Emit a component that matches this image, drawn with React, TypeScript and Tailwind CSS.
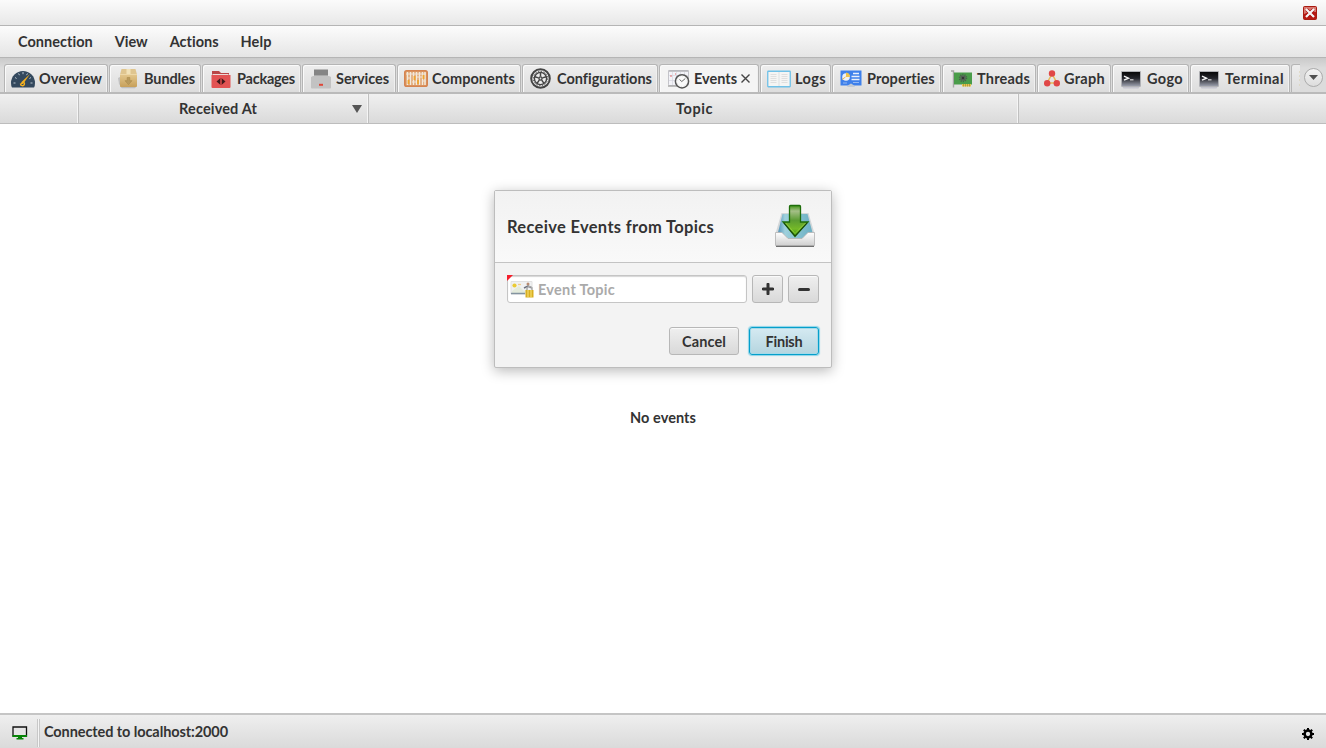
import { useLayoutEffect, useRef, type ReactNode } from "react";

/** Text that is tracked to fill a given width. */
function Label({ text, width, className = "" }: { text: string; width: number; className?: string }) {
  const ref = useRef<HTMLSpanElement>(null);
  useLayoutEffect(() => {
    const el = ref.current;
    if (!el) return;
    const fit = () => {
      el.style.letterSpacing = "0px";
      const natural = el.getBoundingClientRect().width;
      el.style.letterSpacing = `${(width - natural) / text.length}px`;
    };
    fit();
    document.fonts.ready.then(fit);
  }, [text, width]);
  return (
    <span ref={ref} className={`inline-block whitespace-pre ${className}`}>
      {text}
    </span>
  );
}

function OverviewIcon() {
  return (
    <svg width="24" height="18" viewBox="0 0 24 18">
      <path d="M0 13a12 12 0 0 1 24 0q0 3-1 4.500H1Q0 16 0 13Z" fill="#34495e" />
      <path d="M2.500 13h2M4 7.500l1.600 1M7.500 3.500l1 1.700M12 2v2.200M16.500 3.500l-1 1.700M20 7.500l-1.600 1M21.500 13h-2" stroke="#b9c6d0" strokeWidth="1" />
      <path d="m19 4-8.500 8-1 2.500 2.800-.7Z" fill="#f5b120" />
      <path d="M12.500 12a2 2 0 1 1-3 1.500" stroke="#f5b120" strokeWidth="1.400" fill="none" />
    </svg>
  );
}

function BundleIcon() {
  return (
    <svg width="20" height="21" viewBox="0 0 20 21">
      <defs>
        <linearGradient id="box" x2="0" y2="1"><stop stopColor="#e4c88e" /><stop offset="1" stopColor="#c7a05a" /></linearGradient>
      </defs>
      <path d="M0 10 3 8.500V19l-2-3Z" fill="#c2c2c2" />
      <path d="M2 18.500h16.500L17 20.300H4Z" fill="#bdbdbd" />
      <path d="M3.500 1h14l1.500 5.500H2Z" fill="#dfc58f" />
      <path d="M8.500 1h4v5.500h-4Z" fill="#f2e2b8" />
      <path d="M2 6h17v12q0 1-1 1H3q-1 0-1-1Z" fill="url(#box)" />
      <path d="M2 6.500h17" stroke="#f0dcae" strokeWidth=".8" />
      <path d="M9.200 9.500h2.600v3.200H14l-3.500 4-3.500-4h2.200Z" fill="#b99a5c" stroke="#ab8b4b" strokeWidth=".6" />
    </svg>
  );
}

function PackageIcon() {
  return (
    <svg width="20" height="18" viewBox="0 0 20 18">
      <path d="M1 1h7l2 2h8v5H1Z" fill="#b94747" />
      <path d="M1.500 4h16v3h-16Z" fill="#ecd9d6" />
      <path d="M.5 5h19v12q0 1-1 1h-17q-1 0-1-1Z" fill="#e25353" />
      <path d="m9 8.500-3.500 3L9 14.500ZM11 8.500l3.500 3-3.500 3Z" fill="#42191b" />
      <path d="M10 8v7" stroke="#8b2929" />
    </svg>
  );
}

function ServiceIcon() {
  return (
    <svg width="20" height="20" viewBox="0 0 20 20">
      <path d="M3 .5h14V8H3Z" fill="#858585" />
      <path d="M2 7h16l2 1v10.500q0 1-1 1H1q-1 0-1-1V8Z" fill="#c2c2c2" />
      <path d="M3 6.500h14" stroke="#a9a9a9" />
      <path d="M8 14.800h4v2H8Z" fill="#df4638" />
    </svg>
  );
}

function ComponentIcon() {
  return (
    <svg width="24" height="17" viewBox="0 0 24 17">
      <rect x=".8" y=".8" width="22.400" height="15.400" rx="1.800" fill="#dfa06d" stroke="#d58450" strokeWidth="1.600" />
      <path d="M3.500 2v13M6.500 2v13M9.500 2v13M12.500 2v13M15.500 2v13M18.500 2v13M21 2v13" stroke="#f3eadc" strokeWidth="1.500" />
      <path d="M2 4h20M3 8h4M8 12h4M13 7h5M18 11h4" stroke="#efe4d5" strokeWidth="1.200" />
      <path d="M4.500 10v4M10.500 6v4M14 10v4M19.500 5v4" stroke="#efa52f" strokeWidth="1.800" />
    </svg>
  );
}

function ConfigIcon() {
  return (
    <svg width="21" height="21" viewBox="0 0 21 21">
      <circle cx="10.500" cy="10.500" r="9.300" fill="#eeeeee" stroke="#454545" strokeWidth="2" />
      <circle cx="10.500" cy="10.500" r="6.100" fill="none" stroke="#454545" strokeWidth="1.400" />
      <circle cx="10.500" cy="10.500" r="7.200" fill="none" stroke="#454545" strokeWidth="1" strokeDasharray="1.300 1.528" />
      <path d="M10.500 4.500v4M16.200 8.700l-3.800 1.200M14 15.400l-2.300-3.300M7 15.400l2.300-3.300M4.800 8.700l3.800 1.200" stroke="#454545" strokeWidth="1.500" />
      <circle cx="10.500" cy="10.500" r="2.200" fill="#454545" /><circle cx="10.500" cy="10.500" r=".9" fill="#ddd" />
    </svg>
  );
}

function EventIcon() {
  return (
    <svg width="22" height="20" viewBox="0 0 22 20">
      <rect x=".5" y="1.500" width="20" height="15" rx=".8" fill="#f3f3f8" stroke="#c4c4ca" />
      <path d="M.5 2h20" stroke="#b4b4b8" strokeWidth="1.500" />
      <path d="M1 6.500h19M1 11.500h19M4.500 3v13M8.500 3v13M12.500 3v13M16.500 3v13" stroke="#d5d6df" strokeWidth=".7" />
      <path d="M2 7h2M7 5h1" stroke="#e46a6a" />
      <path d="M0 17h9" stroke="#aaa" strokeWidth="1.500" />
      <circle cx="14" cy="12.300" r="6.600" fill="#fafafa" stroke="#555" strokeWidth="1.500" />
      <circle cx="14" cy="12.300" r="5.200" fill="none" stroke="#c7c7c7" strokeWidth=".8" strokeDasharray=".7 2" />
      <path d="m11.500 10.500 2.300 2 3.500-3" stroke="#444" strokeWidth=".8" fill="none" />
    </svg>
  );
}

function LogIcon() {
  return (
    <svg width="24" height="18" viewBox="0 0 24 18">
      <rect x=".75" y="1.250" width="22.500" height="15.500" rx=".5" fill="#f5f5f4" stroke="#6fc1e8" strokeWidth="1.300" />
      <path d="M12 2v14" stroke="#dde1e3" />
      <path d="M3.500 4.500h6M3.500 6.500h6M3.500 8.500h6M3.500 10.500h6M3.500 12.500h6M14.500 4.500h6M14.500 6.500h6M14.500 8.500h6M14.500 10.500h6M14.500 12.500h6" stroke="#dddddc" strokeWidth=".9" />
    </svg>
  );
}

function PropertyIcon() {
  return (
    <svg width="22" height="17" viewBox="0 0 22 17">
      <path d="M.5.5h21v15H.5Z" fill="#3e80eb" />
      <circle cx="6" cy="7" r="3.800" fill="#eef0f4" /><path d="M6 7V2.500A4.500 4.500 0 0 1 10 7Z" fill="#edc34e" />
      <path d="M5.500 7 2 9.500" stroke="#f0b948" />
      <path d="M13 3.500h6M11.500 6.500h8M11.500 9.500h8" stroke="#eaf0fb" strokeWidth="1.300" />
      <path d="M3 13h4M13 12.500h6" stroke="#94b8f2" />
      <path d="M7 17q.5-2 4-3.500 3.500 1.500 4 3.500Z" fill="#c3cad3" />
    </svg>
  );
}

function ThreadIcon() {
  return (
    <svg width="21" height="18" viewBox="0 0 21 18">
      <path d="M0 1h2.500v16.500" fill="none" stroke="#a6a6a6" strokeWidth="1.400" />
      <path d="M3 2.500h18v12H3Z" fill="#4a9c4a" />
      <path d="M11 14h9v2.500h-9Z" fill="#e6c54e" /><path d="M12.500 14v2.500M14.500 14v2.500M16.500 14v2.500M18.500 14v2.500" stroke="#a08a35" strokeWidth=".7" />
      <circle cx="12" cy="8" r="3.500" fill="none" stroke="#46624a" strokeWidth="1.400" strokeDasharray="1.100 1.100" />
      <path d="M9.500 5.500h5v5h-5Z" fill="#555c57" /><circle cx="12" cy="8" r="1" fill="#282f2a" />
    </svg>
  );
}

function GraphIcon() {
  return (
    <svg width="16" height="17" viewBox="0 0 16 17">
      <path d="M8 4 3 13h10Z" fill="none" stroke="#e7ba57" strokeWidth="1.500" />
      <g fill="#e04747"><circle cx="8" cy="3.500" r="3.200" /><circle cx="3.200" cy="13.200" r="3.200" /><circle cx="12.800" cy="13.200" r="3.200" /></g>
    </svg>
  );
}

function TerminalIcon() {
  return (
    <svg width="20" height="20" viewBox="0 0 20 20">
      <defs><linearGradient id="screen" x2="0" y2="1"><stop stopColor="#050505" /><stop offset=".45" stopColor="#25262c" /><stop offset="1" stopColor="#a1a5b3" /></linearGradient></defs>
      <path d="M1 17.500h18l-1.500 2h-15Z" fill="#c4c4ce" />
      <rect x=".5" y="2.500" width="19" height="15" rx=".5" fill="url(#screen)" stroke="#b0b1b5" strokeWidth="1" />
      <path d="m3 7.200 4.500 2L3 11.200" stroke="#f4f4f4" strokeWidth="1.400" fill="none" /><path d="M9 10.800h3.500" stroke="#ccc" strokeWidth="1.300" />
    </svg>
  );
}

function InboxIcon() {
  return (
    <svg width="42" height="45" viewBox="0 0 42 45">
      <defs>
        <linearGradient id="arrow" x2="0" y2="1"><stop stopColor="#3f9415" /><stop offset=".18" stopColor="#a5bf88" /><stop offset=".48" stopColor="#5b9c32" /><stop offset=".75" stopColor="#74b828" /><stop offset="1" stopColor="#359505" /></linearGradient>
        <linearGradient id="tray" x2="0" y2="1"><stop stopColor="#fff" /><stop offset="1" stopColor="#cecece" /></linearGradient>
        <linearGradient id="water" x2="1" y2="0"><stop stopColor="#5192b8" /><stop offset=".2" stopColor="#9ed0dc" /><stop offset="1" stopColor="#6aafc3" /></linearGradient>
      </defs>
      <path d="M7.500 9h27l6 20.500-5.500 5H7l-5.500-5Z" fill="#d3d7d9" />
      <path d="M8.500 10h25l5 18.500-5.500 2-4.500 5h-14l-4.500-5-6-2Z" fill="url(#water)" />
      <path d="M1.500 28.500h6.500l6 6h14l6-6h6.500v12.500q0 1-1 1h-37q-1 0-1-1Z" fill="url(#tray)" stroke="#b3b3b3" strokeWidth=".8" />
      <path d="M2 42.300h38" stroke="#555" strokeWidth="1" />
      <path d="M15.500 2.500q0-1 1-1h9q1 0 1 1v15.500h7.500L21 32.500 9 18h6.500Z" fill="url(#arrow)" stroke="#1d6d0a" strokeWidth="1.300" />
      <path d="m11.800 19 9.200 10.500L31.500 19" fill="none" stroke="#9bd63f" strokeWidth=".7" />
      <path d="m10 19 11 13L33 19" fill="none" stroke="#1c390e" strokeWidth=".9" />
    </svg>
  );
}

function TopicIcon() {
  return (
    <svg width="24" height="18" viewBox="0 0 24 18">
      <path d="M1 1.500h21V14H1Z" fill="#f0f1f2" stroke="#e2e2e2" />
      <path d="m2 11 7-5 5 5 4-3v5H2Z" fill="#e4ebdc" />
      <path d="M1 13.500h14" stroke="#8494a0" strokeWidth="1.500" />
      <circle cx="4.500" cy="5.500" r="2.100" fill="#eacb35" />
      <path d="M8 4.500h3" stroke="#efcb8c" strokeWidth="1.300" />
      <circle cx="18" cy="4" r="1.500" fill="#b88c72" /><path d="m14 8 4-2 4 2" stroke="#6f7380" strokeWidth="1.500" fill="none" />
      <path d="M17 10V8q2.500-3 5 0v2" fill="none" stroke="#aaa" strokeWidth="1.400" />
      <path d="M15.500 10h8v7.500h-8Z" fill="#d8ae20" /><path d="M18 10v7M21 10v7" stroke="#f5dd6c" strokeWidth="1.200" />
    </svg>
  );
}

type Tab = { name: string; text: number; icon: ReactNode; tab: string; slot: string; active?: boolean };
const tabs: Tab[] = [
  { name: "Overview", text: 63, icon: <OverviewIcon />, tab: "w-[104px] pl-1.5", slot: "w-7" },
  { name: "Bundles", text: 51, icon: <BundleIcon />, tab: "w-[92px] pl-2", slot: "w-[26px]" },
  { name: "Packages", text: 58, icon: <PackageIcon />, tab: "w-[99px] pl-2", slot: "w-[26px]" },
  { name: "Services", text: 53, icon: <ServiceIcon />, tab: "w-[94px] pl-2", slot: "w-[25px]" },
  { name: "Components", text: 83, icon: <ComponentIcon />, tab: "w-[124px] pl-1.5", slot: "w-7" },
  { name: "Configurations", text: 95, icon: <ConfigIcon />, tab: "w-[136px] pl-[7px]", slot: "w-[27px]" },
  { name: "Events", text: 43, icon: <EventIcon />, tab: "w-[100px] pl-2", slot: "w-[26px]", active: true },
  { name: "Logs", text: 31, icon: <LogIcon />, tab: "w-[71px] pl-1.5", slot: "w-7" },
  { name: "Properties", text: 68, icon: <PropertyIcon />, tab: "w-[109px] pl-[7px]", slot: "w-[27px]" },
  { name: "Threads", text: 53, icon: <ThreadIcon />, tab: "w-[94px] pl-2", slot: "w-[26px]" },
  { name: "Graph", text: 41, icon: <GraphIcon />, tab: "w-[74px] pl-1.5", slot: "w-5" },
  { name: "Gogo", text: 36, icon: <TerminalIcon />, tab: "w-[77px] pl-2", slot: "w-[26px]" },
  { name: "Terminal", text: 59, icon: <TerminalIcon />, tab: "w-[100px] pl-2", slot: "w-[26px]" },
];

const buttonStyle = "flex h-7 items-center justify-center rounded-[3px] border border-[#b7b7b7] bg-linear-to-b from-[#efefef] to-[#d9d9d9] shadow-[inset_0_1px_0_#fafafa]";

export default function App() {
  return (
    <div className="flex h-screen w-screen flex-col overflow-hidden bg-white font-['Lato',sans-serif] text-[14.5px] leading-5 font-bold text-[#333]">
      <div className="flex h-[26px] shrink-0 items-center justify-end border-b border-[#b5b5b5] bg-linear-to-b from-[#fbfbfb] to-[#e8e8e8] pr-[9px]">
        <svg width="14" height="14" viewBox="0 0 14 14">
          <rect x=".5" y=".5" width="13" height="13" rx="1" fill="#b71912" stroke="#a91a10" />
          <path d="M1 1h12v5Q7 5 1 8Z" fill="#d87870" />
          <path d="m3.500 3.500 7 7m0-7-7 7" stroke="#a40000" strokeWidth="3.400" />
          <path d="m3 3 8 8m0-8-8 8" stroke="#f5f5f5" strokeWidth="2.300" />
        </svg>
      </div>
      <nav className="flex h-8 shrink-0 items-center gap-[22px] border-b border-[#b5b5b5] bg-linear-to-b from-[#fcfcfc] to-[#e5e5e5] pt-px pl-[18px]">
        <Label text="Connection" width={75} />
        <Label text="View" width={33} />
        <Label text="Actions" width={49} />
        <Label text="Help" width={31} />
      </nav>
      <div className="flex h-9 shrink-0 items-end border-b-2 border-[#bababa] bg-linear-to-b from-[#cacaca] to-[#dcdcdc] to-30% pl-1">
        <div className="flex w-[1296px] shrink-0 gap-px overflow-hidden">
          {tabs.map((t) => (
            <div key={t.name} className={`flex h-7 shrink-0 items-center rounded-t-[3px] border border-b-0 border-[#b5b5b5] shadow-[inset_1px_1px_0_#fafafa,inset_-1px_0_0_#f0f0f0] ${t.active ? "bg-[#f4f4f4]" : "bg-linear-to-b from-[#eeeeee] to-[#dddddd]"} ${t.tab}`}>
              <span className={`shrink-0 ${t.slot}`}>{t.icon}</span>
              <Label text={t.name} width={t.text} className="pt-px" />
              {t.active && (
                <svg className="ml-1 shrink-0" width="9" height="9" viewBox="0 0 9 9"><path d="m.5.5 8 8m0-8-8 8" stroke="#444" strokeWidth="1.400" /></svg>
              )}
            </div>
          ))}
          <div className="flex h-7 w-6 shrink-0 items-center rounded-tl-[3px] border border-b-0 border-[#b5b5b5] bg-linear-to-b from-[#eeeeee] to-[#dddddd] pl-[7px]">
            <svg width="2" height="16"><path d="M0 1h2M0 5h2M0 9h2M0 14h2" stroke="#d9cda9" /></svg>
          </div>
        </div>
        <button className="mb-[5px] ml-1 flex size-[19px] items-center justify-center rounded-full border border-[#ababab] bg-linear-to-b from-[#f3f3f3] to-[#dddddd]">
          <svg width="9" height="5"><path d="M0 0h9L4.500 5Z" fill="#505050" /></svg>
        </button>
      </div>
      <div className="grid h-[30px] shrink-0 grid-cols-[79px_290px_650px_307px] border-b border-[#bdbdbd] bg-linear-to-b from-[#f0f0f0] to-[#dadada]">
        <div className="border-r border-[#c0c0c0] shadow-[inset_-1px_0_0_#f5f5f5]" />
        <div className="flex items-center border-r border-[#c0c0c0] pl-[100px] shadow-[inset_-1px_0_0_#f5f5f5]">
          <Label text="Received At" width={78} className="pt-px" />
          <svg className="mr-1.5 ml-auto" width="10" height="8"><path d="M0 0h10L5 8Z" fill="#555" /></svg>
        </div>
        <div className="flex items-center justify-center border-r border-[#c0c0c0] pl-0.5 shadow-[inset_-1px_0_0_#f5f5f5]"><Label text="Topic" width={37} className="pt-px" /></div>
        <div />
      </div>
      <main className="relative flex min-h-0 grow items-center justify-center">
        <Label text="No events" width={66} className="pb-px" />
        <section className="absolute top-[66px] left-[494px] flex h-[178px] w-[338px] flex-col rounded-[2px] border border-[#bdbdbd] bg-[#f3f3f3] shadow-[0_3px_13px_rgba(0,0,0,0.28)]">
          <header className="flex h-[72px] shrink-0 items-center justify-between border-b border-[#c3c3c3] bg-linear-to-b from-[#f2f2f2] to-[#f9f9f9] pr-[15px] pl-3">
            <Label text="Receive Events from Topics" width={207} className="pt-px text-[16.5px]" />
            <InboxIcon />
          </header>
          <div className="flex gap-[5px] px-3 pt-3">
            <div className="relative flex h-7 w-60 items-center rounded-[3px] border border-[#c5c5c5] bg-white pl-0.5 shadow-[inset_0_1px_1px_#d5d5d5]">
              <TopicIcon />
              <Label text="Event Topic" width={77} className="ml-1 pt-px text-[#aaa]" />
              <svg className="absolute -top-px -left-px" width="6" height="6"><path d="M0 0h6L0 6Z" fill="#f51e2b" /></svg>
            </div>
            <button className={`${buttonStyle} w-[31px]`}><svg width="12" height="12"><path d="M6 1.200v9.600M1.200 6h9.600" stroke="#333" strokeWidth="3" strokeLinecap="round" /></svg></button>
            <button className={`${buttonStyle} w-[31px]`}><svg width="12" height="3"><path d="M1.500 1.500h9" stroke="#333" strokeWidth="3" strokeLinecap="round" /></svg></button>
          </div>
          <footer className="mt-6 flex justify-end gap-2.5 px-3">
            <button className={`${buttonStyle} w-[70px]`}><Label text="Cancel" width={44} className="pt-px" /></button>
            <button className="flex h-7 w-[70px] items-center justify-center rounded-[3px] border border-[#059fcb] bg-linear-to-b from-[#d5eaf2] to-[#b5d5df] shadow-[0_0_1px_1px_#8cd4e8,inset_0_0_0_1px_#a5d9e8]"><Label text="Finish" width={37} className="pt-px" /></button>
          </footer>
        </section>
      </main>
      <footer className="flex h-[35px] shrink-0 items-center border-t-2 border-[#c5c5c5] bg-linear-to-b from-[#efefef] to-[#dadada] pt-0.5">
        <svg className="ml-3" width="16" height="14" viewBox="0 0 16 14">
          <path d="M1 1h13.500v9H1Z" fill="#e5e5e5" stroke="#111" strokeWidth="1.300" />
          <path d="M.5 9h14.500v2H.5ZM6 11h4v1h1.500v1.500h-7V12H6Z" fill="#078407" />
        </svg>
        <span className="mr-1 ml-[9px] h-7 w-[3px] border-x border-[#c8c8c8] bg-[#f5f5f5]" />
        <Label text="Connected to localhost:2000" width={184} className="pb-px" />
        <svg className="mt-0.5 mr-3 ml-auto" width="12" height="12" viewBox="0 0 12 12">
          <circle cx="6" cy="6" r="3.400" fill="none" stroke="#000" strokeWidth="2.500" />
          <path d="M6 0v2M6 10v2M0 6h2M10 6h2M1.800 1.800l1.500 1.500M8.700 8.700l1.500 1.500M10.200 1.800 8.700 3.300M1.800 10.200l1.500-1.500" stroke="#000" strokeWidth="2" />
        </svg>
      </footer>
    </div>
  );
}
